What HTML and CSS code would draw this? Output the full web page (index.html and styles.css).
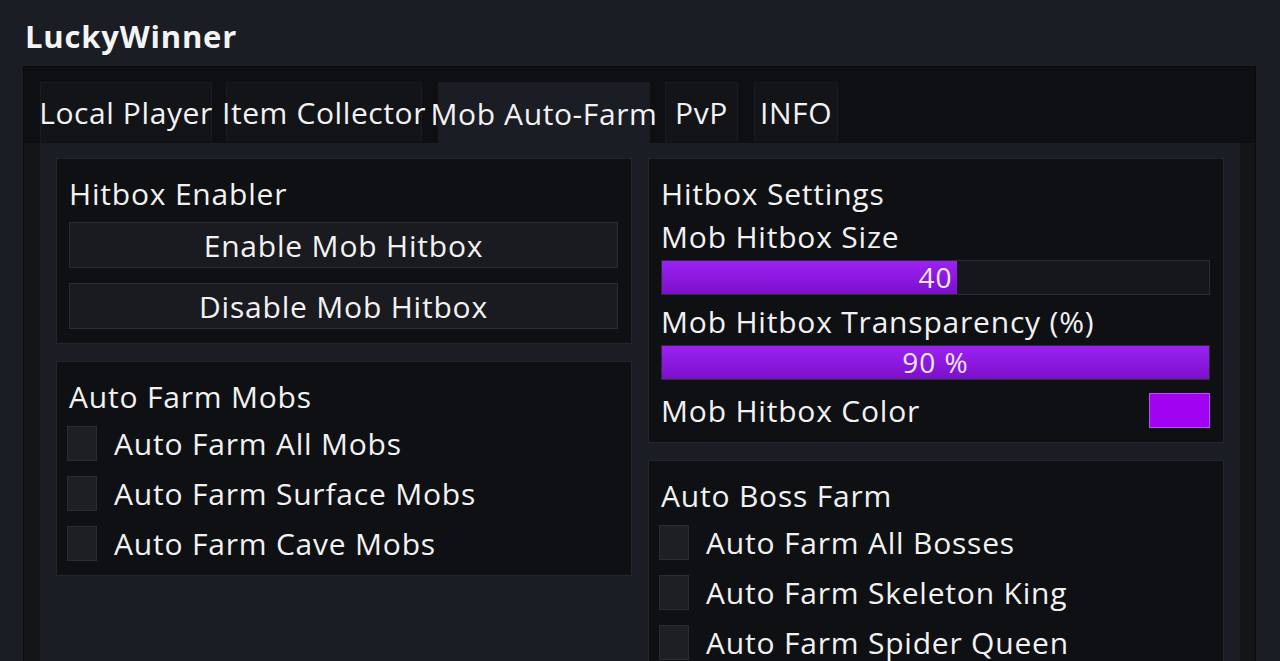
FILE: index.html
```
<!DOCTYPE html>
<html lang="en">
<head>
    <meta charset="UTF-8">
    <meta name="viewport" content="width=device-width, initial-scale=1.0">
    <title>LuckyWinner</title>
    <link rel="stylesheet" href="styles.css">
</head>
<body>

<h1 class="title">LuckyWinner</h1>

<div class="window">
    <!-- tabs -->
    <div class="tabs">
        <div class="tab tab-local">Local Player</div>
        <div class="tab tab-items">Item Collector</div>
        <div class="tab tab-mob active">Mob Auto-Farm</div>
        <div class="tab tab-pvp">PvP</div>
        <div class="tab tab-info">INFO</div>
    </div>

    <div class="content">
        <div class="column">
            <div class="panel">
                <div class="panel-title">Hitbox Enabler</div>
                <button class="btn">Enable Mob Hitbox</button>
                <button class="btn">Disable Mob Hitbox</button>
            </div>

            <div class="panel">
                <div class="panel-title">Auto Farm Mobs</div>
                <div class="check-list">
                    <label class="check"><span class="box"></span>Auto Farm All Mobs</label>
                    <label class="check"><span class="box"></span>Auto Farm Surface Mobs</label>
                    <label class="check"><span class="box"></span>Auto Farm Cave Mobs</label>
                </div>
            </div>
        </div>

        <div class="column">
            <div class="panel">
                <div class="panel-title">Hitbox Settings</div>
                <div class="field-label">Mob Hitbox Size</div>
                <div class="slider">
                    <div class="fill" style="width: 54%"></div>
                    <span class="value">40</span>
                </div>
                <div class="field-label">Mob Hitbox Transparency (%)</div>
                <div class="slider">
                    <div class="fill" style="width: 100%"></div>
                    <span class="value">90 %</span>
                </div>
                <div class="color-row">
                    <span>Mob Hitbox Color</span>
                    <span class="swatch"></span>
                </div>
            </div>

            <div class="panel">
                <div class="panel-title">Auto Boss Farm</div>
                <div class="check-list">
                    <label class="check"><span class="box"></span>Auto Farm All Bosses</label>
                    <label class="check"><span class="box"></span>Auto Farm Skeleton King</label>
                    <label class="check"><span class="box"></span>Auto Farm Spider Queen</label>
                </div>
            </div>
        </div>
    </div>
</div>

</body>
</html>
```

FILE: styles.css
```
html, body {
    height: 100%;
}
body {
    font-family: "Open Sans", "Liberation Sans", sans-serif;
    background-color: #1b1d25;
    color: #f2f2f2;
    margin: 0;
    padding: 0;
    overflow: hidden;
}
.title {
    margin: 0;
    padding: 18px 0 0 25px;
    font-size: 31px;
    line-height: 36px;
    font-weight: 700;
    letter-spacing: 0.8px;
    color: #f4f4f4;
}
.window {
    margin: 12px 24px 0 23px;
    height: 700px;
    background-color: #141519;
    border: 1px solid #0a0a0d;
}
.tabs {
    display: flex;
    height: 61px;
    padding: 15px 0 0 16px;
    background-color: #0e0f12;
}
.tab {
    height: 60px;
    display: flex;
    align-items: center;
    justify-content: center;
    white-space: nowrap;
    font-size: 30px;
    letter-spacing: 0.6px;
    background-color: #131418;
    border: 1px solid #1a1b20;
    border-bottom: none;
    box-sizing: border-box;
}
.tab.active {
    background-color: #1b1d24;
    height: 61px;
}
.tab-local { width: 172px; margin-right: 14px; }
.tab-items { width: 196px; margin-right: 16px; }
.tab-mob { width: 212px; margin-right: 15px; }
.tab-pvp { width: 73px; margin-right: 16px; }
.tab-info { width: 84px; }

.content {
    margin: 0 15px 0 16px;
    height: 600px;
    background-color: #1b1d24;
    padding: 15px 16px;
    display: grid;
    grid-template-columns: 1fr 1fr;
    column-gap: 16px;
    align-items: start;
}
.column {
    display: flex;
    flex-direction: column;
    gap: 17px;
}
.panel {
    background-color: #0f1013;
    border: 1px solid #24262c;
    padding: 17px 13px 14px 12px;
    display: flex;
    flex-direction: column;
    font-size: 30px;
    letter-spacing: 0.8px;
}
.panel-title {
    line-height: 36px;
    margin-bottom: 10px;
}
.btn {
    font-family: inherit;
    font-size: 30px;
    letter-spacing: 0.8px;
    color: #f2f2f2;
    height: 46px;
    width: 100%;
    padding: 0;
    background-color: #1a1b20;
    border: 1px solid #2a2c32;
    margin-bottom: 15px;
    cursor: pointer;
}
.btn:last-child {
    margin-bottom: 0;
}
.check-list {
    display: flex;
    flex-direction: column;
    gap: 14px;
    margin-left: -2px;
}
.check {
    display: flex;
    align-items: center;
    height: 36px;
}
.box {
    width: 30px;
    height: 35px;
    margin-right: 17px;
    background-color: #1d1f25;
    border: 1px solid #2a2c31;
    box-sizing: border-box;
    flex-shrink: 0;
}
.field-label {
    line-height: 36px;
    margin-top: -3px;
    margin-bottom: 5px;
}
.slider {
    position: relative;
    height: 35px;
    background-color: #16171c;
    border: 1px solid #2b2d33;
    box-sizing: border-box;
    margin-bottom: 12px;
}
.fill {
    height: 100%;
    background: linear-gradient(#9b22f2, #7c0fcc);
}
.value {
    position: absolute;
    left: 0;
    right: 0;
    top: 0;
    text-align: center;
    font-size: 28px;
    letter-spacing: 1px;
    line-height: 33px;
    color: #f3e6ff;
}
.color-row {
    display: flex;
    justify-content: space-between;
    align-items: center;
    height: 35px;
    margin-top: 1px;
}
.swatch {
    width: 61px;
    height: 35px;
    box-sizing: border-box;
    background-color: #a102f2;
    border: 1px solid #b94dff;
}
```
